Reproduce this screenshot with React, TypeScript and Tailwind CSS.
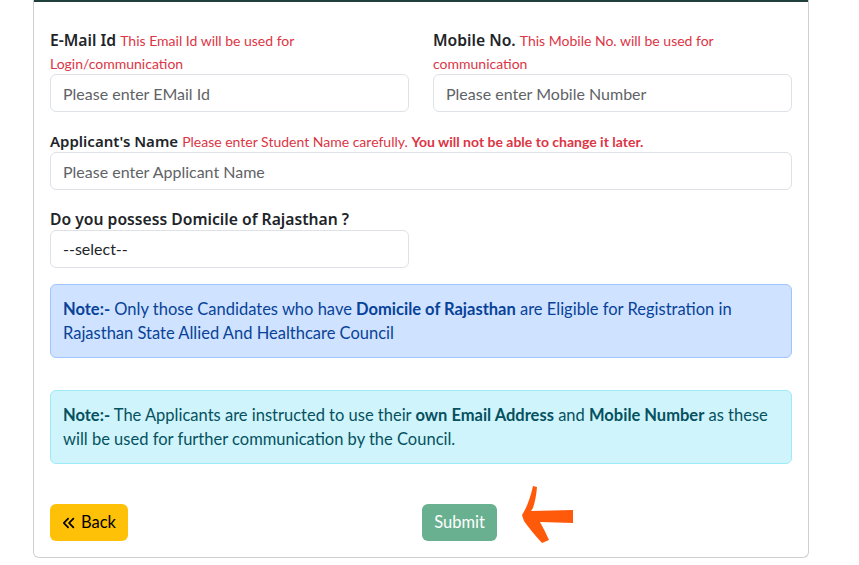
import React from "react";
import { FaAnglesLeft } from "react-icons/fa6";

function Arrow() {
  return (
    <svg
      className="absolute left-[518px] top-[484px]"
      width="60"
      height="62"
      viewBox="0 0 60 62"
    >
      <path
        d="M15 2 L19 3 Q18 15 15 24 L13 27 L55 26 L55 39 L22 38 Q27 47 31 56 L24 59 Q13 47 6 37 L4 31 Q11 20 15 2 Z"
        fill="#ff5a0a"
      />
    </svg>
  );
}

const labelCls = "font-['Noto_Sans',sans-serif] font-semibold text-[15.7px] leading-none";
const inputCls =
  "h-[38px] rounded-[6px] border border-[#dee2e6] px-3 text-[16px] placeholder:text-[#5f6366] outline-none bg-white";

export default function App() {
  return (
    <div className="relative w-[859px] h-[565px] bg-white overflow-hidden font-['Lato',sans-serif] text-[#212529]">
      <div className="ml-[33px] w-[776px] border border-[#cfcfcf] border-t-0 rounded-b-[6px] bg-white">
        <div className="h-[2px] bg-[#1f3f3a]" />
        <div className="px-4 pt-[26px] pb-4 flex flex-col">
          <div className="grid grid-cols-2 gap-x-6">
            <div className="flex flex-col">
              <label className="block leading-[23px] text-[16px]">
                <span className={labelCls}>E-Mail Id</span>{" "}
                <span className="text-[14px] leading-none text-[#dc3545]">This Email Id will be used for Login/communication</span>
              </label>
              <input className={inputCls} placeholder="Please enter EMail Id" />
            </div>
            <div className="flex flex-col">
              <label className="block leading-[23px] text-[16px]">
                <span className={labelCls}>Mobile No.</span>{" "}
                <span className="text-[14px] leading-none text-[#dc3545]">This Mobile No. will be used for communication</span>
              </label>
              <input className={inputCls} placeholder="Please enter Mobile Number" />
            </div>
          </div>

          <label className="mt-[17px] block leading-[23px] text-[16px]">
            <span className="font-['Noto_Sans',sans-serif] font-semibold text-[15px] leading-none">Applicant's Name</span>{" "}
            <span className="text-[14px] leading-none text-[#dc3545]">
              Please enter Student Name carefully. <b className="font-bold">You will not be able to change it later.</b>
            </span>
          </label>
          <input className={inputCls} placeholder="Please enter Applicant Name" />

          <label className="mt-[17px] block leading-[23px] text-[16px]">
            <span className={labelCls}>Do you possess Domicile of Rajasthan ?</span>
          </label>
          <div className="grid grid-cols-2 gap-x-6">
            <div className="h-[38px] rounded-[6px] border border-[#dee2e6] px-3 flex items-center text-[16px] text-[#212529]">
              --select--
            </div>
          </div>

          <div className="mt-4 rounded-[6px] border border-[#9ec5fe] bg-[#cfe2ff] px-3 py-3 text-[16.5px] leading-[24px] text-[#084298]">
            <b className="font-bold">Note:-</b> Only those Candidates who have <b className="font-bold">Domicile of Rajasthan</b> are Eligible for Registration in Rajasthan State Allied And Healthcare Council
          </div>

          <div className="mt-[32px] rounded-[6px] border border-[#9eeaf9] bg-[#cff4fc] px-3 py-3 text-[16.5px] leading-[24px] text-[#055160]">
            <b className="font-bold">Note:-</b> The Applicants are instructed to use their <b className="font-bold">own Email Address</b> and <b className="font-bold">Mobile Number</b> as these will be used for further communication by the Council.
          </div>

          <div className="mt-[40px] grid grid-cols-2">
            <div>
              <button className="h-[37px] w-[78px] rounded-[6px] bg-[#ffc107] text-[16.5px] text-black flex items-center justify-center gap-[5px]">
                <FaAnglesLeft className="w-[14px] h-[14px]" />
                <span>Back</span>
              </button>
            </div>
            <div className="pl-px">
              <button className="h-[37px] w-[75px] rounded-[6px] bg-[#198754] opacity-65 text-[16.5px] text-white flex items-center justify-center">
                Submit
              </button>
            </div>
          </div>
        </div>
      </div>
      <Arrow />
    </div>
  );
}
